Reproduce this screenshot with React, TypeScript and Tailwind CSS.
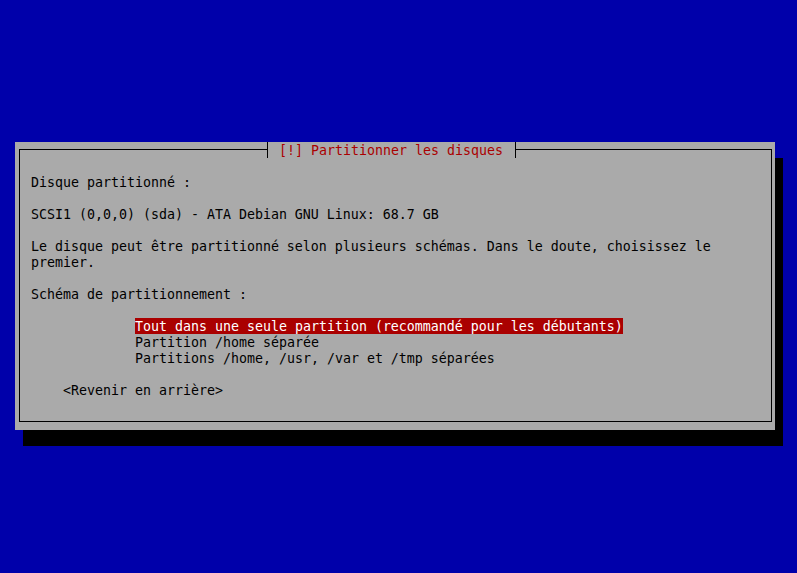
function Row({ children, className = '' }: { children?: React.ReactNode; className?: string }) {
  return <div className={`h-[16px] pt-[2px] leading-[14px] whitespace-pre ${className}`}>{children}</div>
}

export default function App() {
  const mono = { fontFamily: '"DejaVu Sans Mono", "Liberation Mono", monospace' }
  return (
    <div className="w-[797px] h-[573px] bg-[#0000aa] pt-[142px] pl-[15px] overflow-hidden" style={mono}>
      {/* dialog */}
      <div className="w-[760px] h-[288px] bg-[#aaaaaa] shadow-[8px_16px_0_#000] pt-[7px] pl-[4px] text-[13.29px] text-black">
        <div className="w-[753px] h-[273px] border border-black">
          {/* title */}
          <div className="-mt-[8px] ml-[243px] h-[16px] flex">
            <div className="w-[4px]" />
            <div className="w-px h-[16px] bg-black" />
            <Row className="bg-[#aaaaaa] pl-[11px] pr-[12px] text-[#aa0000]">[!] Partitionner les disques</Row>
            <div className="w-px h-[16px] bg-black" />
          </div>

          <div className="pl-[11px] pt-[16px]">
            <Row>Disque partitionné :</Row>
            <Row />
            <Row>SCSI1 (0,0,0) (sda) - ATA Debian GNU Linux: 68.7 GB</Row>
            <Row />
            <Row>Le disque peut être partitionné selon plusieurs schémas. Dans le doute, choisissez le</Row>
            <Row>premier.</Row>
            <Row />
            <Row>Schéma de partitionnement :</Row>
            <Row />
            <div className="ml-[104px] flex flex-col items-start">
              <Row className="bg-[#aa0000] text-white">Tout dans une seule partition (recommandé pour les débutants)</Row>
              <Row>Partition /home séparée</Row>
              <Row>Partitions /home, /usr, /var et /tmp séparées</Row>
            </div>
            <Row />
            <Row className="ml-[32px]">&lt;Revenir en arrière&gt;</Row>
          </div>
        </div>
      </div>
    </div>
  )
}
